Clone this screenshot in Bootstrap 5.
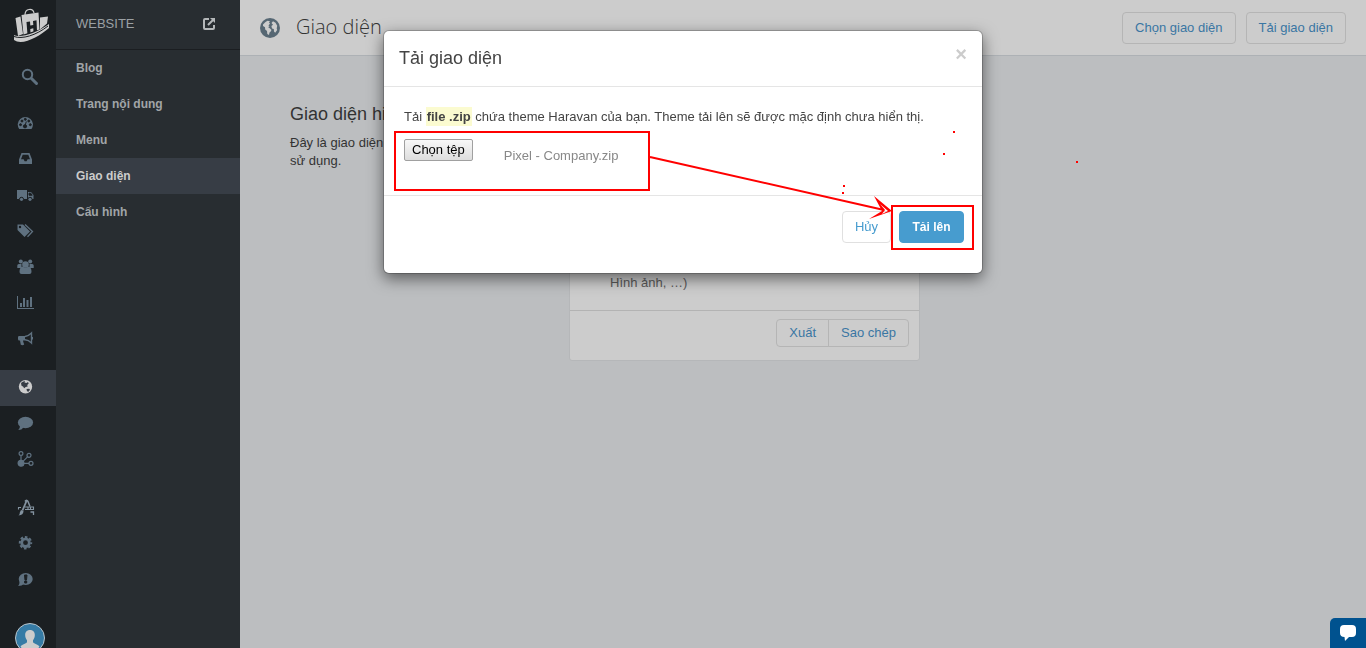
<!DOCTYPE html>
<html lang="vi">
<head>
<meta charset="utf-8">
<meta name="viewport" content="width=device-width, initial-scale=1">
<title>Giao diện</title>
<link rel="stylesheet" href="https://cdn.jsdelivr.net/npm/bootstrap@5.3.0/dist/css/bootstrap.min.css">
<style>
body{font-family:"Liberation Sans",Arial,sans-serif;font-size:13px;line-height:18px;color:#333;background:#bcbec0}
.rail{width:56px;background:#1b1f22;color:#5f7180}
.rail a{color:inherit;height:36px;padding-left:17px}
.rail a.active{background:#373d45;color:#ccc}
.rail .apart{margin-top:12px}
.rail .cut{fill:#1b1f22;stroke:#1b1f22}
.rail .brand{height:50px;padding-left:12px;color:#ccc}
.rail .find{height:56px;padding:0 0 2px 21px}
.rail .me-pic{padding:25px 0 0 15px}
.side{width:184px;background:#282d31}
.side header{height:50px;border-bottom:1px solid #1b1e21;color:#9ba0a4;padding:0 24px 2px 20px}
.side .nav-link{height:36px;font-size:12px;line-height:36px;padding:0 20px;font-weight:700;color:#a1a5a8}
.side .nav-link.active{background:#373d45;color:#ccc}
.side header a{color:#b4b7b9}
.topbar{height:56px;background:#ccc;border-bottom:1px solid #adb1b5;padding:0 20px}
.topbar h1{font:300 20px/28px "Open Sans",sans-serif;padding-bottom:2px}
.ui-btn{font-size:13px;line-height:18px;padding:6px 12px;border-radius:4px;--bs-btn-color:#3a76a3;--bs-btn-border-color:#b5b5b5;--bs-btn-hover-color:#3a76a3;--bs-btn-hover-border-color:#999}
.ui-btn.tight{padding:4px 12px}
.light-btn{--bs-btn-color:#479ccf;--bs-btn-border-color:#e0e0e0}
.send-btn{font-size:12px;min-width:65px;--bs-btn-color:#fff;--bs-btn-bg:#479ccf;--bs-btn-border-color:#479ccf;--bs-btn-hover-color:#fff;--bs-btn-hover-bg:#3c8dbd}
.work{padding:48px 50px}
.about{width:279px;padding-right:68px}
.about h2,.modal-title{font-size:18px;line-height:20px;font-weight:400}
.about h2{margin-bottom:10px}
.theme-card{width:351px;background:#ccc;border:1px solid #b5b7b9;border-radius:3px;color:#5a5a5a}
.theme-card .card-body{min-height:205px;padding:18px 40px}
.theme-card .card-footer{background:none;border-color:#b3b3b3;padding:8px 10px 13px}
.modal-dialog{max-width:600px;margin:30px auto}
.modal-content{border-color:rgba(0,0,0,.2);border-radius:6px;box-shadow:0 5px 15px rgba(0,0,0,.5);color:#444}
.modal-header{height:56px;padding:0 15px 2px;border-color:#e5e5e5}
.shut{border:0;background:none;font:700 20px/20px "Liberation Sans",sans-serif;color:#ccc;padding:0}
.modal-body{padding:21px 20px 0;height:108px}
.hl{background:#fbfbd0;padding:2px 1px}
.picker{padding-top:9px}
.pick{font-size:13px;line-height:15px;color:#000;border:1px solid #a0a0a0;border-radius:2px;background:linear-gradient(#f8f8f8,#ddd);padding:2px 7px 3px}
.fname{color:#888;padding:8px 0 0 31px}
.modal-footer{padding:15px 18px 30px;border-color:#e5e5e5;gap:8px}
.modal-footer>*{margin:0}
.marks{left:0;top:0;pointer-events:none;overflow:visible}
.chat{width:36px;height:30px;background:#00528f;border-radius:5px 0 0 0;z-index:1060}
</style>
</head>
<body>
<div class="d-flex vh-100 overflow-hidden">
<nav class="rail flex-shrink-0" aria-label="Chính">
<a class="brand d-flex align-items-center" href="#" aria-label="Haravan"><svg width="38" height="36" viewBox="0 0 38 36" fill="currentColor"><path d="M13 8C13 1 21 1 22 6" fill="none" stroke="currentColor" stroke-width="1.200"/><path d="M9.500 8l17-2.500 1 17-16 5zM3.500 11l5-1.500L11 27l-5 2zM28 10.500l8-1-1 7-7 6z"/><path d="M14.500 15l3.500-.6.3 4 3-.5-.3-4 3.500-.6.500 11-3.500 1.500-.2-4.500-3 .6.2 5-3 1z" fill="#1b1f22"/><path d="M2 28c6 3 21-1 35-11v4C27 30 10 39 2 33z"/><path d="M2 29.500c8 3 22-1 34-10.500" fill="none" stroke="#1b1f22" stroke-width="1"/></svg></a>
<a class="find d-flex align-items-center" href="#" aria-label="Tìm"><svg width="18" height="18" viewBox="0 0 18 18" fill="none" stroke="currentColor"><circle cx="6.500" cy="6.500" r="4.700" stroke-width="2"/><path d="M10.500 10.500l5 5" stroke-width="3" stroke-linecap="round"/></svg></a>
<a class="d-flex align-items-center" href="#" aria-label="Tổng quan"><svg width="18" height="18" fill="currentColor"><path d="M2.200 14A7.600 7.600 0 1 1 14.500 14z"/><g class="cut" stroke="none"><circle cx="3.500" cy="9.700" r="1"/><circle cx="5" cy="6" r="1"/><circle cx="8.300" cy="4.300" r="1"/><circle cx="11.800" cy="6" r="1"/><circle cx="13.300" cy="9.700" r="1"/><circle cx="8" cy="11.300" r="1.600"/></g><path class="cut" d="M8 11l1.300-4.500" stroke-width="1"/></svg></a>
<a class="d-flex align-items-center" href="#" aria-label="Đơn hàng"><svg width="18" height="18" fill="currentColor"><path fill-rule="evenodd" d="M4.500 2h8L15 8.500V13H2V8.500zM5.700 3.800 4 8.300h2.600l1 2h2l1-2H13l-1.700-4.500z"/></svg></a>
<a class="d-flex align-items-center" href="#" aria-label="Vận chuyển"><svg width="18" height="18" fill="currentColor"><path d="M0 3h10v9H0zM11 5h3l2.500 3v4H11z"/><path class="cut" stroke="none" d="M12 6.200h1.700l1.500 2H12z"/><g class="cut" stroke-width="1"><circle cx="4.500" cy="12.300" r="2"/><circle cx="13" cy="12.300" r="2"/></g><circle cx="4.500" cy="12.300" r="1.600"/><circle cx="13" cy="12.300" r="1.600"/></svg></a>
<a class="d-flex align-items-center" href="#" aria-label="Sản phẩm"><svg width="18" height="18" fill="currentColor"><path fill-rule="evenodd" d="M.5 1.500H6l7 7-5.500 5.500L.5 7zM3 2.800a1.200 1.200 0 1 0 0 2.400 1.200 1.200 0 0 0 0-2.400z"/><path d="M8 1.500l7.500 7-5 5.200" fill="none" stroke="currentColor" stroke-width="1.300"/></svg></a>
<a class="d-flex align-items-center" href="#" aria-label="Khách hàng"><svg width="18" height="18" fill="currentColor"><circle cx="3.800" cy="2.500" r="2"/><circle cx="13.200" cy="2.500" r="2"/><path d="M.3 9V6.500Q.3 5 1.800 5h2.700v4zM16.700 9V6.500q0-1.500-1.500-1.500h-2.700v4z"/><circle cx="8.500" cy="5.500" r="3.300"/><path d="M2.500 13q0-5 3-5.500 3 2 6 0 3 .5 3 5.500 0 2-2 2h-8q-2 0-2-2z"/></svg></a>
<a class="d-flex align-items-center" href="#" aria-label="Báo cáo"><svg width="18" height="18" fill="currentColor"><path d="M0 1h1v12h16v1H0zM3 8h2v4H3zM6 3h2v9H6zM9.500 5h2v7h-2zM13 2h2v10h-2z"/></svg></a>
<a class="d-flex align-items-center" href="#" aria-label="Khuyến mãi"><svg width="18" height="18" fill="currentColor"><path d="M2.300 5H8v4.500H6l.3 1.500.9 2.500q-1.500 1.300-3.400.3L3 9.500h-.7Q1 9.500 1 8V6.300Q1 5 2.300 5z"/><path d="M8 5.500q3.500-.5 6.500-3.500v10q-3-3-6.500-3.200" fill="none" stroke="currentColor" stroke-width="1.400"/><path d="M15 6v2.500" stroke="currentColor" stroke-width="2"/></svg></a>
<a class="active apart d-flex align-items-center" href="#" aria-label="Website"><svg width="18" height="18" fill="currentColor"><circle cx="8.500" cy="7.700" r="6.700"/><path fill="#373d45" d="M4 4q1.500-1.700 4-2l-.5 1.500 2 .5 1.500-1 .7 1.500-1.500 1.500.5 1.500-2 .5L7.200 9.300 6 7.500l-1.500-.8zM9.500 10l2.700-.3.800 1-1.500 2-1.500-.5z"/></svg></a>
<a class="d-flex align-items-center" href="#" aria-label="Bình luận"><svg width="18" height="18" fill="currentColor"><ellipse cx="8.500" cy="7.500" rx="7.600" ry="5.700"/><path d="M3 10q.3 2.500-1.700 5 3.500 0 5.200-2.500z"/></svg></a>
<a class="d-flex align-items-center" href="#" aria-label="Kênh"><svg width="18" height="18" fill="none" stroke="currentColor" stroke-width="1.200"><circle cx="4" cy="2.500" r="1.900"/><circle cx="12" cy="4.300" r="2"/><circle cx="14" cy="12.300" r="2"/><path d="M4 4.500v6M10.500 5.800l-5 5M6 12.300h6"/><circle cx="4" cy="12.300" r="2.900" fill="currentColor"/></svg></a>
<a class="apart d-flex align-items-center" href="#" aria-label="Ứng dụng"><svg width="18" height="18" fill="none" stroke="#8493a0"><path d="M9.500 2 5.500 11.500" stroke-width="1.800"/><path d="M8 2.500q1.500-2.500 3 0l2 5" stroke-width="1.500"/><path d="M1.500 8v2.500M2 8.500h2M8 8h8.500v2.500H8M11 8v2M13.500 8v2" stroke-width="1.100"/><path d="M13.500 13h3v3" stroke-width="1.300"/><path d="M4 11l2.500 1q0 4-5 4.500 1.500-1 1.300-3z" fill="#8493a0" stroke="none"/></svg></a>
<a class="d-flex align-items-center" href="#" aria-label="Cấu hình"><svg width="18" height="18" fill="none" stroke="currentColor"><circle cx="8.500" cy="7.700" r="3.800" stroke-width="2.800"/><circle cx="8.500" cy="7.700" r="5.700" stroke-width="2" stroke-dasharray="2.600 1.877" stroke-dashoffset="1.300"/></svg></a>
<a class="d-flex align-items-center" href="#" aria-label="Phản hồi"><svg width="18" height="18" fill="currentColor"><ellipse cx="8.700" cy="8" rx="7" ry="6"/><path d="M2.500 10q.3 3-1.300 5 4 0 5.500-2z"/><path class="cut" stroke="none" d="M7.500 4h2.500l-.5 5H8zM7.700 10h2v2h-2z"/></svg></a>
<a class="me-pic d-block" href="#" aria-label="Tài khoản"><svg width="30" height="30"><circle cx="15" cy="15" r="14.500" fill="#367ba5" stroke="#b9c4cb"/><path fill="#ccc" d="M15 7c3.500 0 5 2.600 4.800 5.500-.1 2-.8 3.400-1.800 4.700v2c1 1.800 5.500 2 6.500 4.500-5 6-14 6-19 0 1-2.500 5.500-2.700 6.500-4.500v-2c-1-1.300-1.700-2.700-1.800-4.700C10 9.600 11.500 7 15 7z"/></svg></a>
</nav>
<aside class="side flex-shrink-0">
<header class="d-flex align-items-center justify-content-between"><span>WEBSITE</span><a href="#" aria-label="Mở website"><svg class="d-block" width="13" height="13" fill="none" stroke="currentColor" stroke-width="2"><path d="M6 2H2q-1 0-1 1v8q0 1 1 1h8q1 0 1-1V8M5 8l5.500-5.500"/><path d="M7 1h5v5z" fill="currentColor" stroke="none"/></svg></a></header>
<nav class="nav flex-column" aria-label="Website"><a class="nav-link" href="#">Blog</a><a class="nav-link" href="#">Trang nội dung</a><a class="nav-link" href="#">Menu</a><a class="nav-link active" href="#">Giao diện</a><a class="nav-link" href="#">Cấu hình</a></nav>
</aside>
<main class="flex-grow-1">
<div class="topbar d-flex align-items-center">
<svg width="20" height="20"><circle cx="10" cy="10" r="10" fill="#566773"/><path fill="#ccc" d="M3 6.500 5.500 4l2-1.200 2.500.4L9 4.500l1 1-1.500 2 1 1L8 9l2 1.500 1.500 1.500-1 1.800-1 .7-.5 2.500-1.700-1-.3-3-1.800-1.500-.2-2.200L3 8zM11.500 5l1.500-1.700 2.500 1.500 1.700 3-.5 2.700.5 1.500-2 2.700-1.200-1.200-.2-2.500-1.800-.5-.6-2.500 1.600-1.200z"/></svg><h1 class="mb-0 ms-3 me-auto">Giao diện</h1>
<div class="d-flex" style="gap:10px"><button class="btn ui-btn" type="button">Chọn giao diện</button><button class="btn ui-btn" type="button">Tải giao diện</button></div>
</div>
<section class="work d-flex align-items-start">
<div class="about"><h2>Giao diện hiện tại</h2><p>Đây là giao diện website bạn đang sử dụng.</p></div>
<div class="card theme-card">
<div class="card-body d-flex flex-column justify-content-end">Hình ảnh, …)</div>
<div class="card-footer text-end"><div class="btn-group"><button class="btn ui-btn tight" type="button">Xuất</button><button class="btn ui-btn tight" type="button">Sao chép</button></div></div>
</div>
</section>
</main>
</div>
<div class="modal d-block" role="dialog" aria-labelledby="dlg-title">
<div class="modal-dialog">
<div class="modal-content">
<div class="modal-header"><h2 class="modal-title" id="dlg-title">Tải giao diện</h2><button class="shut mb-2" type="button" aria-label="Đóng">×</button></div>
<div class="modal-body"><p class="mb-1">Tải <b class="hl">file .zip</b> chứa theme Haravan của bạn. Theme tải lên sẽ được mặc định chưa hiển thị.</p>
<div class="picker d-flex align-items-start"><button class="pick" type="button">Chọn tệp</button><span class="fname">Pixel - Company.zip</span></div></div>
<div class="modal-footer"><button class="btn ui-btn light-btn" type="button">Hủy</button><button class="btn ui-btn send-btn fw-bold" type="button">Tải lên</button></div>
</div>
<svg class="marks position-absolute" width="600" height="244" viewBox="383 30 600 244" fill="none" stroke="red" stroke-width="2"><path d="M395 132h254v58H395zM892 206h81v43h-81zM650 157l234 53"/><path fill="red" stroke="none" fill-rule="evenodd" d="M874 196l18 15-23 8 13-8zM880 204l5 6-3 4 6-3z"/><path fill="red" stroke="none" d="M953 131h2v2h-2zM943 153h2v2h-2zM843 185h2v2h-2zM842 192h2v2h-2zM1076 161h2v2h-2z"/></svg>
</div>
</div>
<button class="chat position-fixed bottom-0 end-0 border-0 p-0" type="button" aria-label="Trò chuyện"><svg class="d-block mx-auto" width="18" height="18" fill="#fff"><path d="M5 1h8q4 0 4 4v4q0 4-4 4h-3l-4 4-.5-4Q1 13 1 9V5q0-4 4-4z"/></svg></button>
<script src="https://cdn.jsdelivr.net/npm/bootstrap@5.3.0/dist/js/bootstrap.bundle.min.js"></script>
</body>
</html>
